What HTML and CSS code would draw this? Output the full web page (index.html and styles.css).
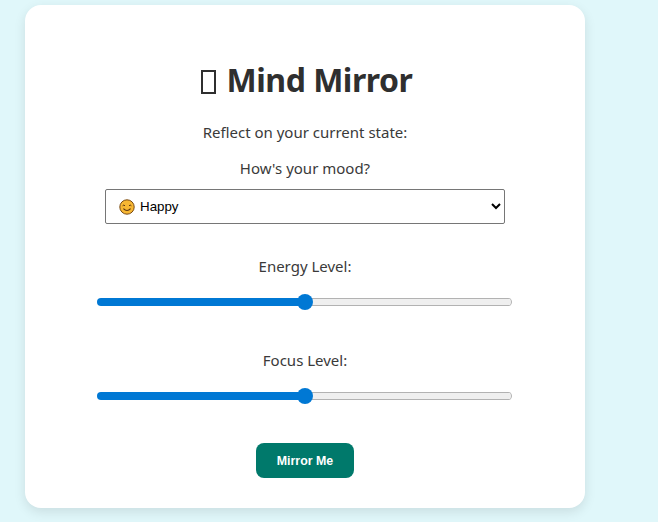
FILE: index.html
```html
<!DOCTYPE html>
<html lang="en">
<head>
  <meta charset="UTF-8">
  <meta name="viewport" content="width=device-width, initial-scale=1.0">
  <title>Mind Mirror</title>
  <link rel="stylesheet" href="styles.css">
</head>
<body>
  <div class="card">
    <h1 class="title"><span class="tofu"></span> Mind Mirror</h1>
    <p class="intro">Reflect on your current state:</p>

    <label class="field-label" for="mood">How's your mood?</label>
    <div class="select-wrap">
      <select id="mood" class="mood">
        <option>Happy</option>
        <option>Sad</option>
        <option>Calm</option>
      </select>
      <svg class="smile" viewBox="0 0 16 16" width="16" height="16" aria-hidden="true">
        <circle cx="8" cy="8" r="7.2" fill="#f7b733" stroke="#7a4a12" stroke-width="1"/>
        <path d="M3.6 6.8q1.2-1.5 2.4 0M10 6.8q1.2-1.5 2.4 0" fill="none" stroke="#5b3410" stroke-width="1"/>
        <path d="M4.4 9.6q3.6 3.8 7.2 0" fill="none" stroke="#5b3410" stroke-width="1.1"/>
      </svg>
    </div>

    <label class="field-label energy" for="energy">Energy Level:</label>
    <input type="range" id="energy" class="slider" min="0" max="100" value="50">

    <label class="field-label focus" for="focus">Focus Level:</label>
    <input type="range" id="focus" class="slider" min="0" max="100" value="50">

    <button class="btn">Mirror Me</button>
  </div>
</body>
</html>
```
FILE: styles.css
```css
* { box-sizing: border-box; }
body {
  margin: 0;
  padding: 5px 25px 14px;
  background: #e0f7fa;
  font-family: "Noto Sans", "Open Sans", sans-serif;
  color: #3a3a3a;
}
.card {
  width: 560px;
  height: 503px;
  padding-top: 54px;
  background: #fff;
  border-radius: 16px;
  box-shadow: 0 4px 12px rgba(0,0,0,0.1);
  display: flex;
  flex-direction: column;
  align-items: center;
}
.title {
  margin: 0 0 0 3px;
  font-size: 32px;
  line-height: 42px;
  font-weight: 700;
  letter-spacing: -0.5px;
  color: #2f2f2f;
}
.tofu {
  display: inline-block;
  width: 15px;
  height: 24px;
  margin-right: 3px;
  border: 2px solid #2f2f2f;
  vertical-align: -2px;
}
.intro { margin: 21px 0 0; font-size: 15px; line-height: 20px; }
.field-label { display: block; font-size: 15px; line-height: 20px; }
.intro + .field-label { margin-top: 16px; }
.energy { margin-top: 32px; }
.focus { margin-top: 40px; }
.select-wrap { position: relative; margin-top: 11px; }
.mood {
  display: block;
  width: 400px;
  height: 35px;
  padding: 0 0 0 30px;
  background: #fff;
  border: 1px solid #767676;
  border-radius: 2px;
  font-family: "Liberation Sans", sans-serif;
  font-size: 13.33px;
  color: #000;
}
.smile { position: absolute; left: 14px; top: 10px; }
.slider {
  display: block;
  width: 415px;
  height: 16px;
  margin: 18px 0 0 -1px;
  padding: 0;
  appearance: none;
  -webkit-appearance: none;
  background: transparent;
}
.slider::-webkit-slider-runnable-track {
  height: 8px;
  border-radius: 4px;
  background:
    linear-gradient(to right, #0078d4 50%, transparent 50%),
    linear-gradient(#b2b2b2 1px, #efefef 1px, #efefef 7px, #b2b2b2 7px);
  box-shadow: inset -1px 0 0 #b2b2b2;
}
.slider::-webkit-slider-thumb {
  -webkit-appearance: none;
  width: 16px;
  height: 16px;
  margin-top: -4px;
  border-radius: 50%;
  background: #0078d4;
}
.btn {
  margin-top: 39px;
  width: 98px;
  height: 35px;
  border: 0;
  border-radius: 8px;
  background: #00796b;
  color: #fff;
  font-family: "Liberation Sans", sans-serif;
  font-size: 12.4px;
  font-weight: 700;
}
```
